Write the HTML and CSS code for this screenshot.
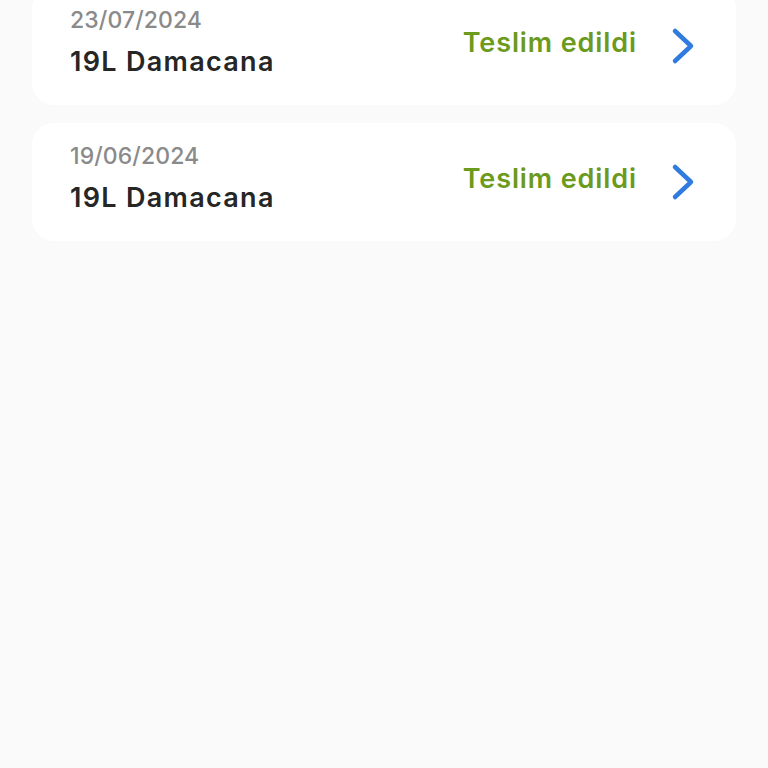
FILE: index.html
```html
<!DOCTYPE html>
<html>
<head>
<meta charset="utf-8">
<link rel="stylesheet" href="styles.css">
</head>
<body>
<div class="list">
  <div class="card">
    <div class="info">
      <div class="date">23/07/2024</div>
      <div class="name">19L Damacana</div>
    </div>
    <div class="status">Teslim edildi</div>
    <svg class="chev" viewBox="0 0 24 38" width="24" height="38"><path d="M4 4 L20 19 L4 34" fill="none" stroke="#2f7be0" stroke-width="4.5" stroke-linecap="round" stroke-linejoin="round"/></svg>
  </div>
  <div class="card">
    <div class="info">
      <div class="date">19/06/2024</div>
      <div class="name">19L Damacana</div>
    </div>
    <div class="status">Teslim edildi</div>
    <svg class="chev" viewBox="0 0 24 38" width="24" height="38"><path d="M4 4 L20 19 L4 34" fill="none" stroke="#2f7be0" stroke-width="4.5" stroke-linecap="round" stroke-linejoin="round"/></svg>
  </div>
</div>
</body>
</html>
```
FILE: styles.css
```css
html, body {
  margin: 0;
  padding: 0;
  background: #fafafa;
  height: 100%;
  overflow: hidden;
}
body {
  font-family: Inter, "Noto Sans", sans-serif;
}
.list {
  display: flex;
  flex-direction: column;
  gap: 18px;
  padding: 0 32px;
  margin-top: -13px;
}
.card {
  background: #ffffff;
  border-radius: 22px;
  height: 118px;
  box-sizing: border-box;
  padding: 0 41px 0 38px;
  display: flex;
  align-items: center;
}
.info {
  flex: 1;
  align-self: flex-start;
  padding-top: 19px;
  display: flex;
  flex-direction: column;
  gap: 12px;
}
.date {
  font-size: 23px;
  font-weight: 500;
  color: #8a8a8a;
  line-height: 28px;
  letter-spacing: 0.1px;
}
.name {
  font-size: 27px;
  font-weight: 600;
  color: #262626;
  line-height: 32px;
  letter-spacing: 1.3px;
}
.status {
  font-size: 27px;
  font-weight: 600;
  color: #6b9a1c;
  margin-right: 34px;
  letter-spacing: 0.9px;
  margin-top: -8px;
}
.chev {
  display: block;
}
```
